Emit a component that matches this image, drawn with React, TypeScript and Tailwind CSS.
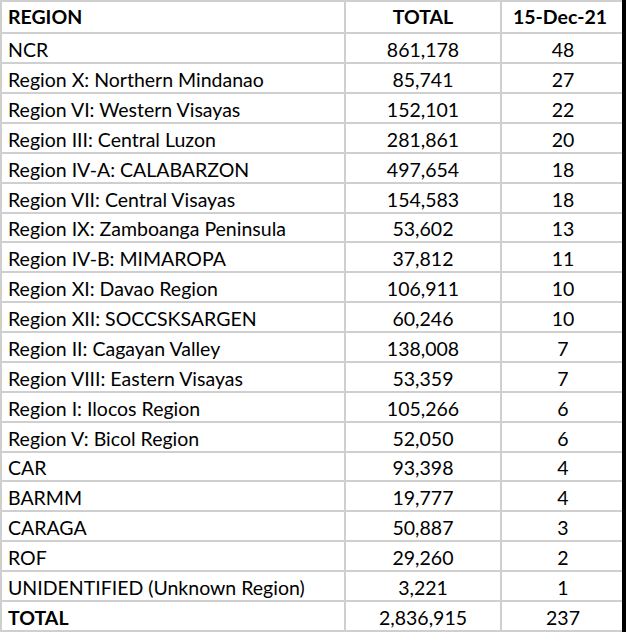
const rows: [string, string, string][] = [
  ["NCR", "861,178", "48"],
  ["Region X: Northern Mindanao", "85,741", "27"],
  ["Region VI: Western Visayas", "152,101", "22"],
  ["Region III: Central Luzon", "281,861", "20"],
  ["Region IV-A: CALABARZON", "497,654", "18"],
  ["Region VII: Central Visayas", "154,583", "18"],
  ["Region IX: Zamboanga Peninsula", "53,602", "13"],
  ["Region IV-B: MIMAROPA", "37,812", "11"],
  ["Region XI: Davao Region", "106,911", "10"],
  ["Region XII: SOCCSKSARGEN", "60,246", "10"],
  ["Region II: Cagayan Valley", "138,008", "7"],
  ["Region VIII: Eastern Visayas", "53,359", "7"],
  ["Region I: Ilocos Region", "105,266", "6"],
  ["Region V: Bicol Region", "52,050", "6"],
  ["CAR", "93,398", "4"],
  ["BARMM", "19,777", "4"],
  ["CARAGA", "50,887", "3"],
  ["ROF", "29,260", "2"],
  ["UNIDENTIFIED (Unknown Region)", "3,221", "1"],
]

function Row({ cells, boldLabel = false, short = false }: { cells: [string, string, string]; boldLabel?: boolean; short?: boolean }) {
  const h = short ? "h-[27px]" : "h-[28px]"
  return (
    <div className="flex border-b-2 border-[#cfcfcf]">
      <div className={`w-[344px] ${h} flex items-end pb-[1px] pl-[6px] border-r-2 border-[#cfcfcf] ${boldLabel ? "font-bold" : ""}`}>
        {cells[0]}
      </div>
      <div className={`w-[156px] ${h} flex items-end justify-center pb-[1px] border-r-2 border-[#cfcfcf]`}>{cells[1]}</div>
      <div className={`w-[116px] ${h} flex items-end justify-center pb-[1px] pl-[6px]`}>{cells[2]}</div>
    </div>
  )
}

export default function App() {
  return (
    <div
      className="w-[626px] h-[632px] overflow-hidden bg-white flex text-black text-[19.5px] leading-[22px]"
      style={{ fontFamily: "Lato, 'Liberation Sans', sans-serif" }}
    >
      <div className="w-[622px] border-l-2 border-t-2 border-[#cfcfcf]">
        <div className="flex border-b-2 border-[#cfcfcf] font-bold">
          <div className="w-[344px] h-[30px] flex items-end pb-[4px] pl-[6px] border-r-2 border-[#cfcfcf]">REGION</div>
          <div className="w-[156px] h-[30px] flex items-end justify-center pb-[4px] border-r-2 border-[#cfcfcf]">TOTAL</div>
          <div className="w-[116px] h-[30px] flex items-end justify-center pb-[4px]">15-Dec-21</div>
        </div>
        {rows.map((r, i) => (
          <Row key={r[0]} cells={r} short={i === 6 || i === 14} />
        ))}
        <Row cells={["TOTAL", "2,836,915", "237"]} boldLabel />
      </div>
      <div className="w-[4px] bg-black" />
    </div>
  )
}
